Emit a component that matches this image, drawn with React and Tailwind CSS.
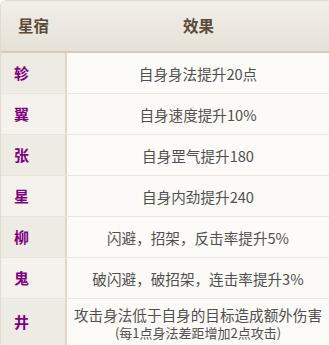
import React from "react";

const rows = [
  { star: "轸", effect: "自身身法提升20点" },
  { star: "翼", effect: "自身速度提升10%" },
  { star: "张", effect: "自身罡气提升180" },
  { star: "星", effect: "自身内劲提升240" },
  { star: "柳", effect: "闪避，招架，反击率提升5%" },
  { star: "鬼", effect: "破闪避，破招架，连击率提升3%" },
  {
    star: "井",
    effect: "攻击身法低于自身的目标造成额外伤害",
    note: "(每1点身法差距增加2点攻击)",
  },
];

const font = { fontFamily: '"Noto Sans CJK SC", "Noto Sans", sans-serif' };

const App = () => (
  <div className="w-[340px] h-[345px] overflow-hidden bg-white" style={font}>
    <div className="border-l border-t border-[#e2dace] rounded-tl-md overflow-hidden">
      <div className="flex h-[52px] border-b-2 border-[#d6cab8] bg-gradient-to-b from-[#f2efe9] to-[#e6e1d8]">
        <div className="w-[66px] flex items-center pl-[17px] text-[15.5px] font-bold text-[#5a4a38]">
          星宿
        </div>
        <div className="w-[263px] flex items-center justify-center text-[15.5px] font-bold text-[#5a4a38]">
          效果
        </div>
      </div>
      {rows.map((row, i) => (
        <div key={row.star} className="flex border-b border-[#ebe4da]">
          <div
            className={
              "w-[66px] shrink-0 flex items-center pl-[13px] border-r-2 border-[#e0d6c8] text-[15px] font-bold text-[#800080] " +
              (i % 2 === 0 ? "bg-[#eeeae4]" : "bg-[#f5f2ed]")
            }
          >
            {row.star}
          </div>
          <div
            className={
              "w-[262px] flex flex-col items-center text-[#505050] " +
              (row.note ? "h-[46px] pt-[6px] " : "h-[40px] justify-center ") +
              (i % 2 === 0 ? "bg-[#fdfbf8]" : "bg-[#fcfaf6]")
            }
          >
            <div className="text-[14.6px] leading-[19px]">{row.effect}</div>
            {row.note && (
              <div className="text-[13px] leading-[17px]">{row.note}</div>
            )}
          </div>
        </div>
      ))}
    </div>
  </div>
);

export default App;
